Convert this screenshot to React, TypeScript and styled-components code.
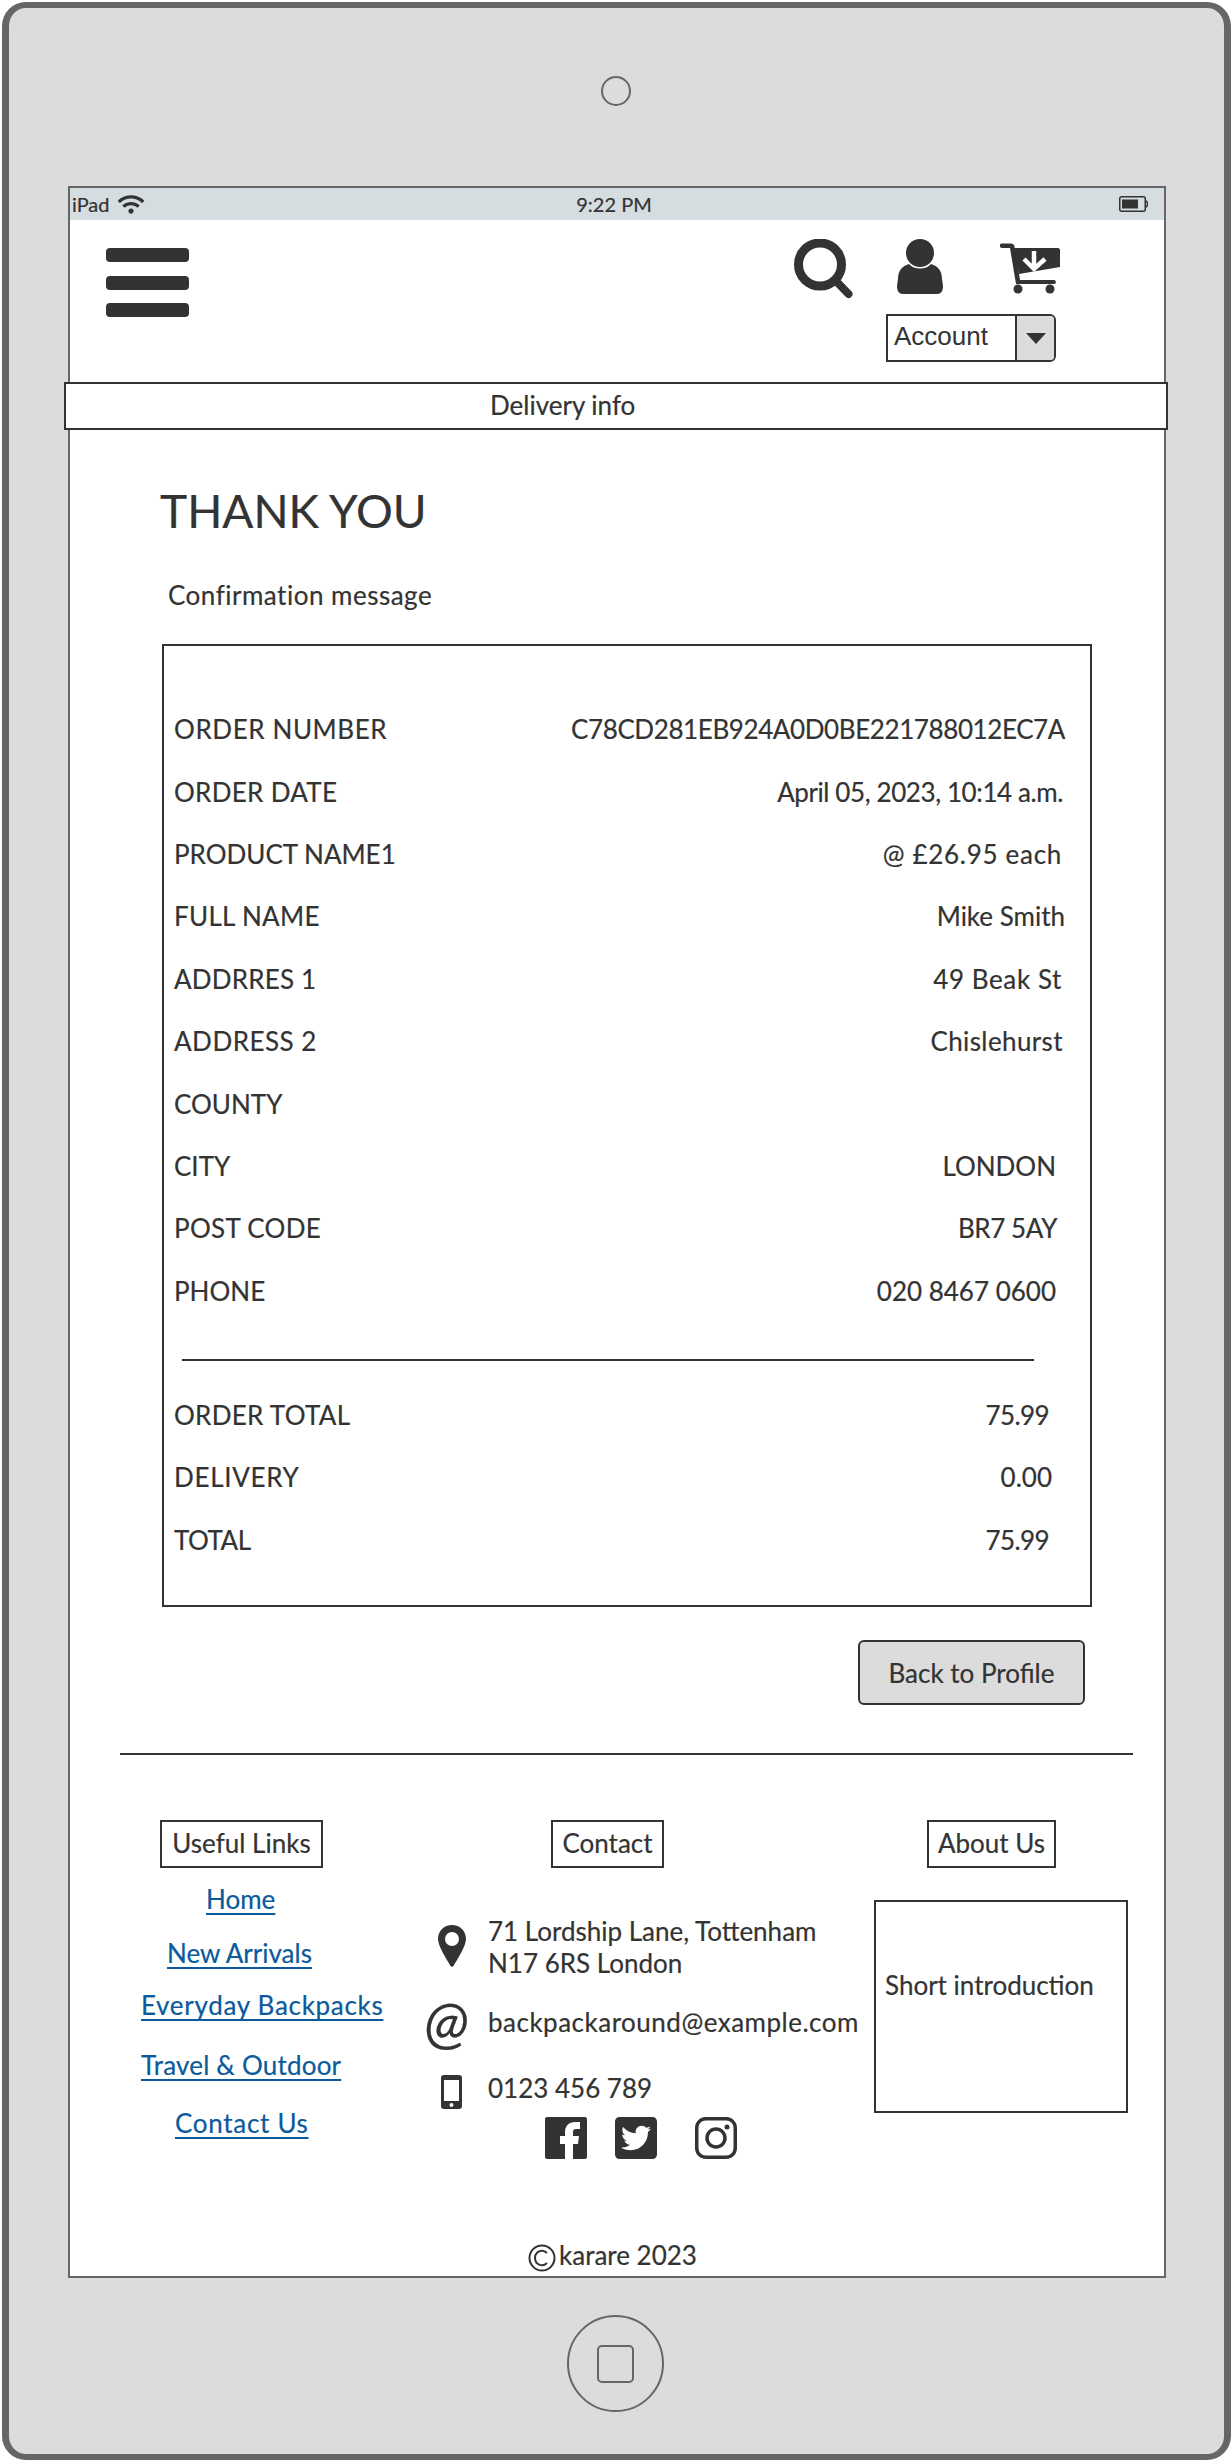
import React from 'react';
import styled, { createGlobalStyle } from 'styled-components';
import { FaTwitterSquare, FaWifi } from 'react-icons/fa';

const colors = {
  ink: '#333333',
  bezel: '#dcdcdc',
  edge: '#666666',
  status: '#d5dde0',
  link: '#0b5a9b',
};

const GlobalStyle = createGlobalStyle`
  html, body {
    margin: 0;
    padding: 0;
    background: #ffffff;
  }
  body {
    font-family: Lato, "Open Sans", sans-serif;
    color: ${colors.ink};
    -webkit-text-stroke: 0.2px currentColor;
  }
  * {
    box-sizing: border-box;
  }
`;

const Frame = styled.div`
  width: 1229px;
  height: 2458px;
  margin: 2px 0 0 2px;
  background: ${colors.bezel};
  border: solid ${colors.edge};
  border-width: 6px 7px;
  border-radius: 24px;
  display: flex;
  flex-direction: column;
`;

const Camera = styled.div`
  width: 30px;
  height: 30px;
  margin: 68px 0 0 592px;
  border: 2px solid ${colors.edge};
  border-radius: 50%;
`;

const Screen = styled.div`
  width: 1098px;
  height: 2092px;
  margin: 80px 0 0 59px;
  background: #ffffff;
  border: 2px solid ${colors.edge};
  display: flex;
  flex-direction: column;
`;

const StatusBar = styled.div`
  height: 32px;
  flex: none;
  background: ${colors.status};
  display: grid;
  grid-template-columns: 1fr auto 1fr;
  align-items: center;
  padding: 0 16px 0 2px;
  font-size: 20px;
`;

const Carrier = styled.div`
  display: flex;
  align-items: center;
  gap: 8px;
  svg {
    width: 28px;
    height: 21px;
  }
`;

const Clock = styled.div`
  margin-left: 8px;
`;

const Battery = styled.svg`
  justify-self: end;
  width: 29px;
  height: 16px;
`;

const Header = styled.header`
  height: 162px;
  flex: none;
  display: flex;
  justify-content: space-between;
  padding: 28px 104px 0 36px;
`;

const Burger = styled.div`
  width: 83px;
  display: flex;
  flex-direction: column;
  gap: 13.5px;
  span {
    height: 14px;
    background: ${colors.ink};
    border-radius: 4px;
  }
`;

const HeaderTools = styled.div`
  margin-top: -9px;
  display: flex;
  flex-direction: column;
`;

const IconRow = styled.div`
  height: 60px;
  display: flex;
  align-items: flex-start;
  gap: 43px;
`;

const ToolIcon = styled.svg<{ $width: number; $height: number; $top?: number; $left?: number }>`
  width: ${(p) => p.$width}px;
  height: ${(p) => p.$height}px;
  margin-top: ${(p) => p.$top ?? 0}px;
  margin-left: ${(p) => p.$left ?? 0}px;
  fill: ${colors.ink};
`;

const Select = styled.div`
  width: 170px;
  height: 48px;
  margin: 15px 4px 0 auto;
  display: flex;
  background: #ffffff;
  border: 2px solid ${colors.ink};
  border-radius: 0 6px 6px 0;
  font-family: "Liberation Sans", Arial, sans-serif;
  font-size: 26px;
  -webkit-text-stroke: 0;
`;

const SelectLabel = styled.div`
  flex: 1;
  padding-left: 6px;
  line-height: 40px;
`;

const SelectArrow = styled.div`
  width: 39px;
  background: ${colors.bezel};
  border-left: 2px solid ${colors.ink};
  border-radius: 0 4px 4px 0;
  display: flex;
  align-items: center;
  justify-content: center;
  &::after {
    content: '';
    border-left: 10px solid transparent;
    border-right: 10px solid transparent;
    border-top: 11px solid ${colors.ink};
  }
`;

const DeliveryBar = styled.div`
  height: 48px;
  flex: none;
  margin: 0 -4px 0 -6px;
  padding-left: 424px;
  background: #ffffff;
  border: 2px solid ${colors.ink};
  font-size: 26px;
  line-height: 42px;
`;

const Main = styled.main`
  padding-left: 90px;
`;

const Title = styled.h1`
  margin: 56px 0 0;
  font-size: 46px;
  font-weight: 400;
  line-height: 50px;
`;

const Confirmation = styled.p`
  margin: 43px 0 0 8px;
  font-size: 26px;
  line-height: 32px;
  letter-spacing: 0.5px;
`;

const OrderBox = styled.section`
  width: 930px;
  height: 963px;
  margin: 33px 0 0 2px;
  padding: 52px 0 0 10px;
  border: 2px solid ${colors.ink};
`;

const OrderRow = styled.div<{ $inset: number }>`
  height: 62.4px;
  display: flex;
  justify-content: space-between;
  align-items: center;
  padding-right: ${(p) => p.$inset}px;
  font-size: 26px;
`;

const RowText = styled.span<{ $spacing?: number }>`
  letter-spacing: ${(p) => p.$spacing ?? 0}px;
`;

const OrderRule = styled.hr`
  width: 852px;
  height: 2px;
  margin: 37px 0 23px 8px;
  border: 0;
  background: ${colors.ink};
`;

const ButtonRow = styled.div`
  width: 925px;
  margin-top: 33px;
  display: flex;
  justify-content: flex-end;
`;

const BackButton = styled.button`
  width: 227px;
  height: 65px;
  background: ${colors.bezel};
  border: 2px solid ${colors.ink};
  border-radius: 6px;
  font: inherit;
  font-size: 26px;
  color: ${colors.ink};
`;

const FooterRule = styled.hr`
  width: 1013px;
  height: 2px;
  margin: 48px 0 0 50px;
  border: 0;
  background: ${colors.ink};
`;

const Footer = styled.footer`
  margin: 65px 0 0 71px;
  display: grid;
  grid-template-columns: 284px 449px 254px;
`;

const FooterHeading = styled.h2<{ $left: number; $width: number }>`
  width: ${(p) => p.$width}px;
  height: 48px;
  margin: 0 0 0 ${(p) => p.$left}px;
  border: 2px solid ${colors.ink};
  font-size: 26px;
  font-weight: 400;
  line-height: 42px;
  text-align: center;
`;

const FooterLink = styled.a<{ $left: number; $top: number; $spacing: number }>`
  display: block;
  width: fit-content;
  margin: ${(p) => p.$top}px 0 0 ${(p) => p.$left}px;
  color: ${colors.link};
  font-size: 26px;
  line-height: 30px;
  letter-spacing: ${(p) => p.$spacing}px;
  text-decoration: underline;
  text-decoration-thickness: 2px;
  text-underline-offset: 4px;
`;

const ContactRow = styled.div<{ $top: number }>`
  display: flex;
  align-items: flex-start;
  margin-top: ${(p) => p.$top}px;
`;

const ContactIcon = styled.div<{ $top?: number; $right?: number }>`
  width: 63px;
  flex: none;
  display: flex;
  justify-content: center;
  padding-right: ${(p) => p.$right ?? 10}px;
  margin-top: ${(p) => p.$top ?? 0}px;
  svg {
    display: block;
    flex: none;
    fill: ${colors.ink};
  }
`;

const AtGlyph = styled.span`
  font-size: 58px;
  font-style: italic;
  line-height: 36px;
`;

const ContactText = styled.div<{ $top?: number; $spacing?: number }>`
  margin-top: ${(p) => p.$top ?? 0}px;
  font-size: 26px;
  line-height: 32px;
  letter-spacing: ${(p) => p.$spacing ?? 0}px;
  white-space: nowrap;
`;

const SocialRow = styled.div`
  margin: 8px 0 0 120px;
  display: flex;
  align-items: flex-start;
`;

const SocialIcon = styled.svg<{ $left?: number }>`
  width: 42px;
  height: 42px;
  display: block;
  flex: none;
  margin-left: ${(p) => p.$left ?? 0}px;
`;

const TwitterIcon = styled(FaTwitterSquare)`
  width: 42px;
  height: 48px;
  margin: -3px 0 0 28px;
  flex: none;
  color: ${colors.ink};
`;

const IntroBox = styled.div`
  width: 254px;
  height: 213px;
  margin-top: 32px;
  padding: 67px 0 0 9px;
  border: 2px solid ${colors.ink};
  font-size: 26px;
  line-height: 32px;
`;

const Copyright = styled.div`
  margin-top: auto;
  margin-bottom: 4px;
  padding-left: 458px;
  display: flex;
  align-items: flex-start;
  gap: 3px;
  font-size: 26px;
  line-height: 22px;
`;

const HomeButton = styled.div`
  width: 97px;
  height: 97px;
  margin: 37px 0 0 558px;
  border: 2px solid ${colors.edge};
  border-radius: 50%;
  display: flex;
  align-items: center;
  justify-content: center;
  &::after {
    content: '';
    width: 33px;
    height: 34px;
    border: 2px solid ${colors.edge};
    border-radius: 5px;
  }
`;

const orderRows = [
  { label: 'ORDER NUMBER', value: 'C78CD281EB924A0D0BE221788012EC7A', inset: 25, ls: 0.6, vs: -0.4 },
  { label: 'ORDER DATE', value: 'April 05, 2023, 10:14 a.m.', inset: 27, ls: 0.3, vs: -0.4 },
  { label: 'PRODUCT NAME1', value: '@ £26.95 each', inset: 28, ls: 0, vs: 0.7 },
  { label: 'FULL NAME', value: 'Mike Smith', inset: 25, ls: 0.3, vs: 0 },
  { label: 'ADDRRES 1', value: '49 Beak St', inset: 28, ls: 0.2, vs: 0.6 },
  { label: 'ADDRESS 2', value: 'Chislehurst', inset: 27, ls: 0.5, vs: 0.4 },
  { label: 'COUNTY', value: '', inset: 27, ls: 0, vs: 0 },
  { label: 'CITY', value: 'LONDON', inset: 34, ls: 0, vs: 0 },
  { label: 'POST CODE', value: 'BR7 5AY', inset: 33, ls: 0.3, vs: -0.4 },
  { label: 'PHONE', value: '020 8467 0600', inset: 34, ls: 0, vs: 0 },
];

const totalRows = [
  { label: 'ORDER TOTAL', value: '75.99', inset: 41, ls: 0.3, vs: -0.6 },
  { label: 'DELIVERY', value: '0.00', inset: 38, ls: 0.7, vs: 0 },
  { label: 'TOTAL', value: '75.99', inset: 41, ls: -0.5, vs: -0.6 },
];

const links = [
  { text: 'Home', left: 65, top: 16, spacing: 0 },
  { text: 'New Arrivals', left: 26, top: 24, spacing: 0 },
  { text: 'Everyday Backpacks', left: 0, top: 22, spacing: 0.7 },
  { text: 'Travel & Outdoor', left: 0, top: 30, spacing: 0.2 },
  { text: 'Contact Us', left: 34, top: 28, spacing: 0.7 },
];

export default function App() {
  return (
    <>
      <GlobalStyle />
      <Frame>
        <Camera />
        <Screen>
          <StatusBar>
            <Carrier>
              iPad
              <FaWifi />
            </Carrier>
            <Clock>9:22 PM</Clock>
            <Battery viewBox="0 0 29 16">
              <rect x="0.75" y="0.75" width="25.5" height="14.5" rx="2" fill="none" stroke={colors.ink} strokeWidth="1.5" />
              <rect x="3" y="3.5" width="16" height="9" fill={colors.ink} />
              <path d="M27 5 C29 6 29 10 27 11" fill="none" stroke={colors.ink} strokeWidth="1.5" />
            </Battery>
          </StatusBar>
          <Header>
            <Burger>
              <span />
              <span />
              <span />
            </Burger>
            <HeaderTools>
              <IconRow>
                <ToolIcon $width={60} $height={60} viewBox="0 0 60 60">
                  <circle cx="26" cy="25.5" r="21.5" fill="none" stroke={colors.ink} strokeWidth="9" />
                  <path d="M41 41 L54.5 55" fill="none" stroke={colors.ink} strokeWidth="8" strokeLinecap="round" />
                </ToolIcon>
                <ToolIcon $width={46} $height={55} viewBox="0 0 46 55">
                  <ellipse cx="23" cy="14" rx="14" ry="14" />
                  <path d="M12 25 C17 31 29 31 34 25 C41 27 45 32 45 40 L46 47 C46 52 44 55 40 55 L6 55 C2 55 0 52 0 47 L1 40 C1 32 5 27 12 25 Z" />
                </ToolIcon>
                <ToolIcon $width={60} $height={51} $top={4} $left={14} viewBox="0 0 60 51">
                  <path d="M2 0.5 L11 0.5 C13 0.5 14 1.5 14.5 3.5 L20 37 L54 37 C56.5 37 56.5 41 54 41 L16 41 L10 5 L2 5 C-1 5 -1 0.5 2 0.5 Z" />
                  <path d="M13 5 L58 5 C59 5 60 6 60 7 L60 24 L19 31 Z" />
                  <circle cx="18" cy="46" r="4.5" />
                  <circle cx="50" cy="46" r="4.5" />
                  <path d="M34 8 L34 25 M24 16 L34 26 L45 16" fill="none" stroke="#ffffff" strokeWidth="4.5" />
                </ToolIcon>
              </IconRow>
              <Select>
                <SelectLabel>Account</SelectLabel>
                <SelectArrow />
              </Select>
            </HeaderTools>
          </Header>
          <DeliveryBar>Delivery info</DeliveryBar>
          <Main>
            <Title>THANK YOU</Title>
            <Confirmation>Confirmation message</Confirmation>
            <OrderBox>
              {orderRows.map((row) => (
                <OrderRow key={row.label} $inset={row.inset}>
                  <RowText $spacing={row.ls}>{row.label}</RowText>
                  <RowText $spacing={row.vs}>{row.value}</RowText>
                </OrderRow>
              ))}
              <OrderRule />
              {totalRows.map((row) => (
                <OrderRow key={row.label} $inset={row.inset}>
                  <RowText $spacing={row.ls}>{row.label}</RowText>
                  <RowText $spacing={row.vs}>{row.value}</RowText>
                </OrderRow>
              ))}
            </OrderBox>
            <ButtonRow>
              <BackButton>Back to Profile</BackButton>
            </ButtonRow>
          </Main>
          <FooterRule />
          <Footer>
            <div>
              <FooterHeading $left={19} $width={163}>Useful Links</FooterHeading>
              {links.map((link) => (
                <FooterLink key={link.text} href="#" $left={link.left} $top={link.top} $spacing={link.spacing}>
                  {link.text}
                </FooterLink>
              ))}
            </div>
            <div>
              <FooterHeading $left={126} $width={113}>Contact</FooterHeading>
              <ContactRow $top={47}>
                <ContactIcon $top={10}>
                  <svg width="28" height="42" viewBox="0 0 28 42">
                    <path
                      fillRule="evenodd"
                      d="M14 0 C22 0 28 6 28 14 C28 21 20 33 15.5 41 C15 42 13 42 12.5 41 C8 33 0 21 0 14 C0 6 6 0 14 0 Z M14 7 A7 7 0 1 0 14 21 A7 7 0 1 0 14 7 Z"
                    />
                  </svg>
                </ContactIcon>
                <ContactText>
                  71 Lordship Lane, Tottenham
                  <br />
                  N17 6RS London
                </ContactText>
              </ContactRow>
              <ContactRow $top={24}>
                <ContactIcon $right={20}>
                  <AtGlyph>@</AtGlyph>
                </ContactIcon>
                <ContactText $top={3} $spacing={0.5}>backpackaround@example.com</ContactText>
              </ContactRow>
              <ContactRow $top={33}>
                <ContactIcon $top={3}>
                  <svg width="21" height="34" viewBox="0 0 21 34">
                    <path
                      fillRule="evenodd"
                      d="M3 0 L18 0 C20 0 21 1 21 3 L21 31 C21 33 20 34 18 34 L3 34 C1 34 0 33 0 31 L0 3 C0 1 1 0 3 0 Z M3 5 L3 26 L18 26 L18 5 Z M10.5 28 A2 2 0 1 0 10.5 32 A2 2 0 1 0 10.5 28 Z"
                    />
                  </svg>
                </ContactIcon>
                <ContactText>0123 456 789</ContactText>
              </ContactRow>
              <SocialRow>
                <SocialIcon viewBox="0 0 42 42">
                  <path
                    fill={colors.ink}
                    d="M2 0 L40 0 C41 0 42 1 42 2 L42 40 C42 41 41 42 40 42 L28 42 L28 27 L33 27 L34 19 L28 19 L28 15 C28 13 29 12 31 12 L35 12 L35 5 L30 5 C24 5 20 9 20 15 L20 19 L15 19 L15 27 L20 27 L20 42 L2 42 C1 42 0 41 0 40 L0 2 C0 1 1 0 2 0 Z"
                  />
                </SocialIcon>
                <TwitterIcon />
                <SocialIcon $left={38} viewBox="0 0 42 42">
                  <rect x="1.75" y="1.75" width="38.5" height="38.5" rx="9" fill="none" stroke={colors.ink} strokeWidth="3.5" />
                  <circle cx="21" cy="21" r="9" fill="none" stroke={colors.ink} strokeWidth="3.5" />
                  <circle cx="32" cy="10" r="2.5" fill={colors.ink} />
                </SocialIcon>
              </SocialRow>
            </div>
            <div>
              <FooterHeading $left={53} $width={129}>About Us</FooterHeading>
              <IntroBox>Short introduction</IntroBox>
            </div>
          </Footer>
          <Copyright>
            <svg width="28" height="28" viewBox="0 0 28 28">
              <circle cx="14" cy="14" r="12.5" fill="none" stroke={colors.ink} strokeWidth="2" />
              <path d="M19 9 C14 4 7 8 7 14 C7 20 14 24 19 19" fill="none" stroke={colors.ink} strokeWidth="2" />
            </svg>
            karare 2023
          </Copyright>
        </Screen>
        <HomeButton />
      </Frame>
    </>
  );
}
